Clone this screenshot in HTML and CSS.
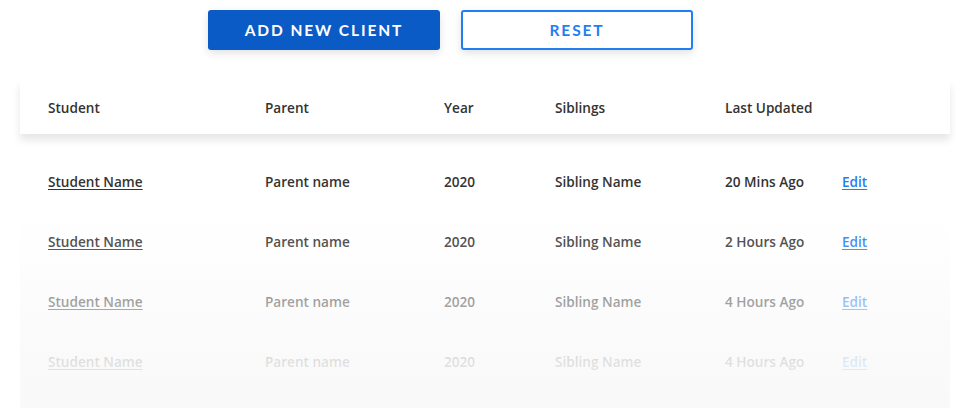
FILE: index.html
```html
<!DOCTYPE html>
<html>
<head>
<meta charset="utf-8">
<link rel="stylesheet" href="styles.css">
</head>
<body>
<div class="actions">
  <button class="btn btn-primary">ADD NEW CLIENT</button>
  <button class="btn btn-outline">RESET</button>
</div>
<div class="table">
  <div class="row head">
    <div>Student</div><div>Parent</div><div>Year</div><div>Siblings</div><div>Last Updated</div><div></div>
  </div>
  <div class="body">
    <div class="row">
      <a class="name">Student Name</a><div>Parent name</div><div>2020</div><div>Sibling Name</div><div>20 Mins Ago</div><a class="edit">Edit</a>
    </div>
    <div class="row">
      <a class="name">Student Name</a><div>Parent name</div><div>2020</div><div>Sibling Name</div><div>2 Hours Ago</div><a class="edit">Edit</a>
    </div>
    <div class="row">
      <a class="name">Student Name</a><div>Parent name</div><div>2020</div><div>Sibling Name</div><div>4 Hours Ago</div><a class="edit">Edit</a>
    </div>
    <div class="row">
      <a class="name">Student Name</a><div>Parent name</div><div>2020</div><div>Sibling Name</div><div>4 Hours Ago</div><a class="edit">Edit</a>
    </div>
    <div class="fade"></div>
  </div>
</div>
</body>
</html>
```
FILE: styles.css
```css
html, body {
  margin: 0;
  background: #ffffff;
  font-family: "Open Sans", "Noto Sans", sans-serif;
  color: #333333;
}
.actions {
  display: flex;
  gap: 21px;
  padding: 10px 0 0 208px;
}
.btn {
  width: 232px;
  height: 40px;
  border-radius: 3px;
  font-family: "Lato", "Noto Sans", sans-serif;
  font-size: 15.5px;
  font-weight: 700;
  letter-spacing: 1.9px;
  cursor: pointer;
  box-shadow: 0 3px 8px rgba(0, 0, 0, 0.12);
}
.btn-primary {
  background: #0b5bc7;
  color: #ffffff;
  border: none;
}
.btn-outline {
  background: #ffffff;
  color: #1f7ef2;
  border: 2px solid #1f7ef2;
}
.table {
  margin: 30px 0 0 20px;
  width: 930px;
}
.row {
  display: grid;
  grid-template-columns: 217px 179px 111px 170px 117px 1fr;
  align-items: center;
  padding-left: 28px;
  height: 60px;
  font-size: 13.6px;
  font-weight: 600;
  color: #333333;
}
.row.head {
  box-sizing: border-box;
  height: 54px;
  padding-top: 1px;
  background: #ffffff;
  box-shadow: 0 6px 8px rgba(0, 0, 0, 0.1);
  position: relative;
  z-index: 1;
}
.body {
  position: relative;
  padding-top: 17px;
  height: 257px;
}
.name {
  text-decoration: underline;
  text-underline-offset: 2px;
  color: #333333;
}
.edit {
  color: #1f7ef2;
  text-decoration: underline;
  text-underline-offset: 2px;
}
.fade {
  position: absolute;
  left: 0;
  right: 0;
  top: 0;
  bottom: 0;
  background: linear-gradient(to bottom, rgba(249,249,249,0) 0px, rgba(249,249,249,0) 70px, rgba(249,249,249,0.15) 108px, rgba(249,249,249,0.55) 168px, rgba(249,249,249,0.87) 228px, rgba(249,249,249,0.96) 274px);
}
```
